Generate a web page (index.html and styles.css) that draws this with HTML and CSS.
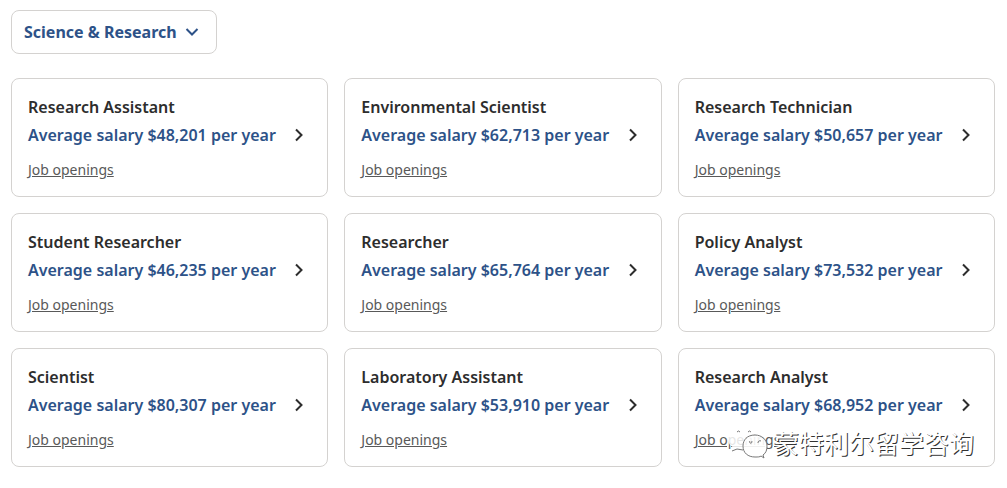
FILE: index.html
```
<!DOCTYPE html>
<html lang="en">
<head>
  <meta charset="UTF-8">
  <meta name="viewport" content="width=device-width, initial-scale=1.0">
  <title>Science &amp; Research salaries</title>
  <link rel="stylesheet" href="styles.css">
</head>
<body>
<main class="salaries">
  <div class="category">
    <select class="category-select" id="category" aria-label="Job category">
      <option>Science &amp; Research</option>
    </select>
    <svg class="category-arrow" viewBox="0 0 14 8" aria-hidden="true"><path d="M1.5 1 L7 6.5 L12.5 1"/></svg>
  </div>

  <div class="jobs">
    <article class="card">
      <a class="card-main" href="#research-assistant">
        <span class="text">
          <span class="title">Research Assistant</span>
          <span class="salary">Average salary $48,201 per year</span>
        </span>
        <svg class="arrow" viewBox="0 0 8 14" aria-hidden="true"><path d="M1 1.5 L6.5 7 L1 12.5"/></svg>
      </a>
      <a class="openings" href="#jobs">Job openings</a>
    </article>

    <article class="card">
      <a class="card-main" href="#environmental-scientist">
        <span class="text">
          <span class="title">Environmental Scientist</span>
          <span class="salary">Average salary $62,713 per year</span>
        </span>
        <svg class="arrow" viewBox="0 0 8 14" aria-hidden="true"><path d="M1 1.5 L6.5 7 L1 12.5"/></svg>
      </a>
      <a class="openings" href="#jobs">Job openings</a>
    </article>

    <article class="card">
      <a class="card-main" href="#research-technician">
        <span class="text">
          <span class="title">Research Technician</span>
          <span class="salary">Average salary $50,657 per year</span>
        </span>
        <svg class="arrow" viewBox="0 0 8 14" aria-hidden="true"><path d="M1 1.5 L6.5 7 L1 12.5"/></svg>
      </a>
      <a class="openings" href="#jobs">Job openings</a>
    </article>

    <article class="card">
      <a class="card-main" href="#student-researcher">
        <span class="text">
          <span class="title">Student Researcher</span>
          <span class="salary">Average salary $46,235 per year</span>
        </span>
        <svg class="arrow" viewBox="0 0 8 14" aria-hidden="true"><path d="M1 1.5 L6.5 7 L1 12.5"/></svg>
      </a>
      <a class="openings" href="#jobs">Job openings</a>
    </article>

    <article class="card">
      <a class="card-main" href="#researcher">
        <span class="text">
          <span class="title">Researcher</span>
          <span class="salary">Average salary $65,764 per year</span>
        </span>
        <svg class="arrow" viewBox="0 0 8 14" aria-hidden="true"><path d="M1 1.5 L6.5 7 L1 12.5"/></svg>
      </a>
      <a class="openings" href="#jobs">Job openings</a>
    </article>

    <article class="card">
      <a class="card-main" href="#policy-analyst">
        <span class="text">
          <span class="title">Policy Analyst</span>
          <span class="salary">Average salary $73,532 per year</span>
        </span>
        <svg class="arrow" viewBox="0 0 8 14" aria-hidden="true"><path d="M1 1.5 L6.5 7 L1 12.5"/></svg>
      </a>
      <a class="openings" href="#jobs">Job openings</a>
    </article>

    <article class="card">
      <a class="card-main" href="#scientist">
        <span class="text">
          <span class="title">Scientist</span>
          <span class="salary">Average salary $80,307 per year</span>
        </span>
        <svg class="arrow" viewBox="0 0 8 14" aria-hidden="true"><path d="M1 1.5 L6.5 7 L1 12.5"/></svg>
      </a>
      <a class="openings" href="#jobs">Job openings</a>
    </article>

    <article class="card">
      <a class="card-main" href="#laboratory-assistant">
        <span class="text">
          <span class="title">Laboratory Assistant</span>
          <span class="salary">Average salary $53,910 per year</span>
        </span>
        <svg class="arrow" viewBox="0 0 8 14" aria-hidden="true"><path d="M1 1.5 L6.5 7 L1 12.5"/></svg>
      </a>
      <a class="openings" href="#jobs">Job openings</a>
    </article>

    <article class="card">
      <a class="card-main" href="#research-analyst">
        <span class="text">
          <span class="title">Research Analyst</span>
          <span class="salary">Average salary $68,952 per year</span>
        </span>
        <svg class="arrow" viewBox="0 0 8 14" aria-hidden="true"><path d="M1 1.5 L6.5 7 L1 12.5"/></svg>
      </a>
      <a class="openings" href="#jobs">Job openings</a>
    </article>
  </div>

  <!-- Account watermark over the last card -->
  <div class="watermark" lang="zh-CN">
    <svg class="watermark-logo" viewBox="0 0 44 34" aria-hidden="true">
      <path class="bubble-back" d="M17 2 C8 2 2 7 2 14 C2 18 4 21 8 23 L6 28 L12 25 C14 26 16 26 18 26 C17 17 23 11 33 11 C31 5 25 2 17 2 Z"/>
      <path class="bubble-edge" d="M6 26 L11 24 C13 24 15 25 17 25 M11 7 Q12.5 5 14 7 M22 7 Q23.5 5 25 7"/>
      <path class="bubble-front" d="M29 10 C21 10 17 15 17 21 C17 28 22 32 29 32 C32 32 34 32 35 31 L38 33 L37 30 C40 28 41 25 41 21 C41 15 36 10 29 10 Z"/>
      <path class="bubble-edge" d="M24 16 a1.2 1.2 0 1 0 1.5 0 M32 18 a2 2 0 0 1 3 -2"/>
    </svg>
    <span>蒙特利尔留学咨询</span>
  </div>
</main>
</body>
</html>
```

FILE: styles.css
```
* {
  box-sizing: border-box;
}
body {
  margin: 0;
  background: #fff;
  color: #2d2d2d;
  font-family: "Noto Sans", "Noto Sans CJK SC", sans-serif;
  font-size: 16px;
}
a {
  color: inherit;
}
.salaries {
  position: relative;
  padding: 10px 12px 20px 11px;
}
.category {
  display: inline-grid;
  align-items: center;
  margin-bottom: 24px;
  vertical-align: top;
}
.category-select,
.category-arrow {
  grid-area: 1 / 1;
}
.category-select {
  appearance: none;
  height: 44px;
  padding: 0 39px 0 12px;
  border: 1px solid #d4d2d0;
  border-radius: 8px;
  background: #fff;
  color: #2d5288;
  font: inherit;
  font-weight: 700;
  cursor: pointer;
}
.category-arrow {
  justify-self: end;
  width: 14px;
  height: 8px;
  margin-right: 18px;
  fill: none;
  stroke: #2d5288;
  stroke-width: 2;
  pointer-events: none;
}
.jobs {
  display: grid;
  grid-template-columns: repeat(3, 1fr);
  gap: 16px;
}
.card {
  padding: 14px 24px 15px 16px;
  border: 1px solid #d4d2d0;
  border-radius: 8px;
}
.card-main {
  display: flex;
  align-items: flex-end;
  justify-content: space-between;
  text-decoration: none;
}
.title,
.salary {
  display: block;
  line-height: 28px;
  font-weight: 600;
}
.salary {
  color: #2d5288;
}
.arrow {
  width: 8px;
  height: 14px;
  margin-bottom: 7px;
  fill: none;
  stroke: #2d2d2d;
  stroke-width: 2;
}
.openings {
  display: block;
  width: fit-content;
  margin-top: 10px;
  font-size: 14px;
  line-height: 22px;
  color: #595959;
}
.watermark {
  position: absolute;
  right: 33px;
  bottom: 27px;
  display: flex;
  align-items: center;
  gap: 4px;
  color: #fff;
  font-family: "Noto Sans CJK SC", sans-serif;
  font-size: 25px;
  line-height: 36px;
  text-shadow: 1px 1px 0 #333;
  pointer-events: none;
}
.watermark-logo {
  width: 44px;
  height: 34px;
}
.bubble-back {
  fill: #fff;
  fill-opacity: 0.85;
}
.bubble-front {
  fill: #fff;
  fill-opacity: 0.9;
  stroke: #777;
}
.bubble-edge {
  fill: none;
  stroke: #777;
}
```
